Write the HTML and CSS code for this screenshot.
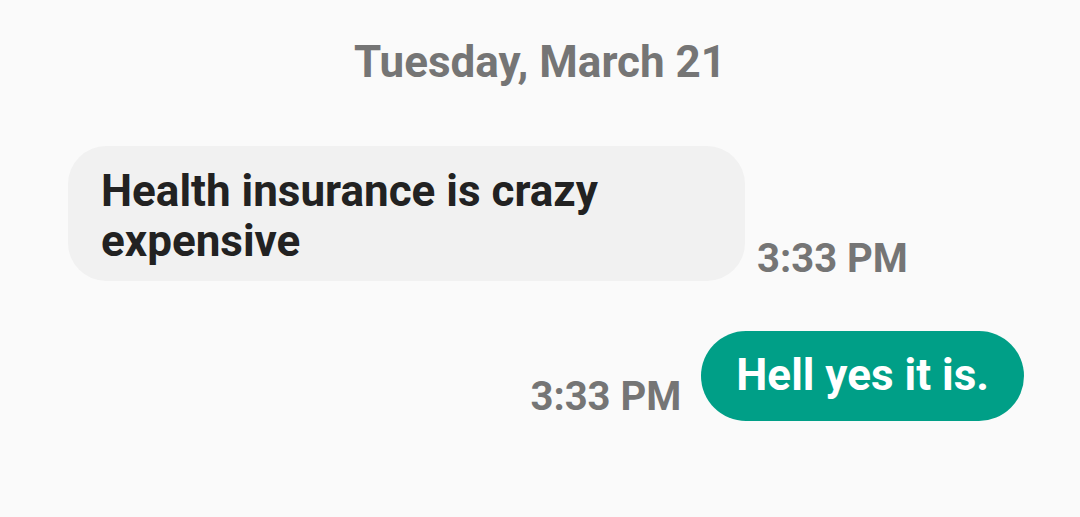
FILE: index.html
```html
<!DOCTYPE html>
<html>
<head>
    <meta charset="utf-8">
    <title>Messages</title>
    <link rel="stylesheet" href="styles.css">
</head>
<body>
    <div class="chat">
        <!-- date header -->
        <div class="date">Tuesday, March 21</div>

        <!-- incoming -->
        <div class="row in">
            <div class="bubble">Health insurance is crazy<br>expensive</div>
            <span class="time">3:33 PM</span>
        </div>

        <!-- outgoing -->
        <div class="row out">
            <span class="time">3:33 PM</span>
            <div class="bubble">Hell yes it is.</div>
        </div>
    </div>
</body>
</html>
```

FILE: styles.css
```css
* {
    margin: 0;
    padding: 0;
    box-sizing: border-box;
}

body {
    width: 1080px;
    height: 517px;
    background: #fafafa;
    font-family: Roboto, "Liberation Sans", sans-serif;
    font-weight: 700;
    overflow: hidden;
}

.chat {
    display: flex;
    flex-direction: column;
}

.date {
    margin-top: 36px;
    text-align: center;
    font-size: 44px;
    line-height: 52px;
    color: #757575;
}

.row {
    display: flex;
    align-items: flex-end;
}

.time {
    font-size: 40px;
    line-height: 44px;
    color: #757575;
}

.row.in {
    margin-top: 58px;
    padding-left: 68px;
    gap: 12px;
}

.row.in .bubble {
    width: 677px;
    height: 135px;
    padding: 20px 33px;
    border-radius: 38px;
    background: #f1f1f1;
    color: #222;
    font-size: 44px;
    line-height: 50px;
}

.row.in .time {
    margin-bottom: 0;
}

.row.out {
    margin-top: 50px;
    padding-right: 56px;
    justify-content: flex-end;
    gap: 20px;
}

.row.out .bubble {
    height: 90px;
    padding: 0 35px;
    border-radius: 45px;
    background: #009f87;
    color: #fff;
    font-size: 44px;
    line-height: 88px;
}

.row.out .time {
    margin-bottom: 2px;
}
```
